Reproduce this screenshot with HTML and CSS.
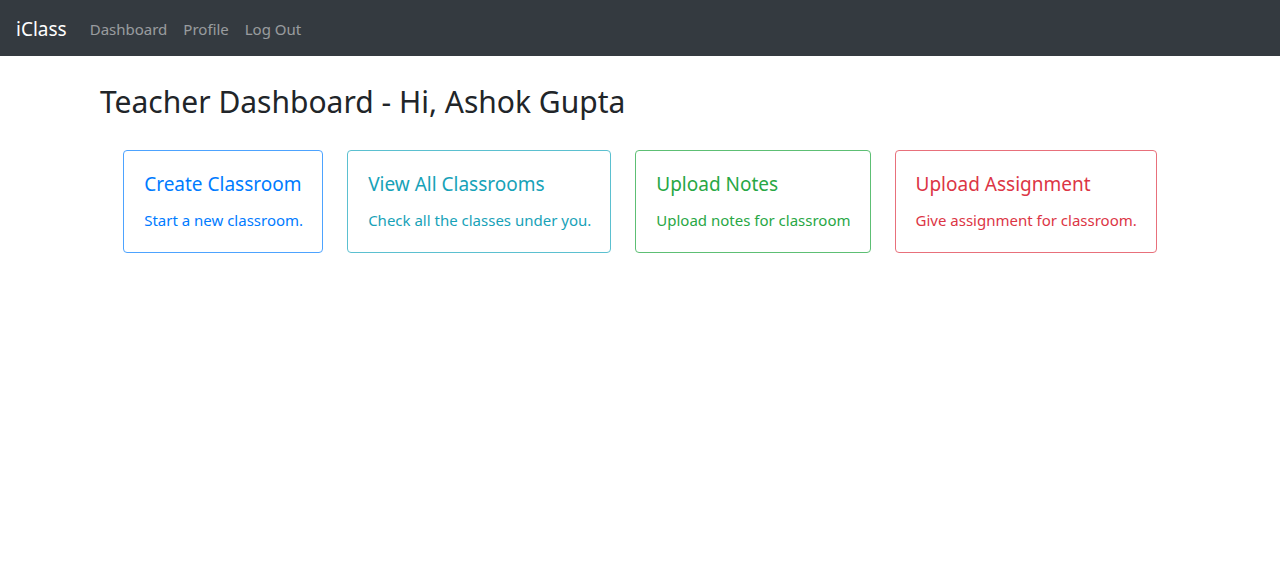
FILE: index.html
```html
<!DOCTYPE html>
<html lang="en">
<head>
<meta charset="utf-8">
<title>iClass - Teacher Dashboard</title>
<link rel="stylesheet" href="styles.css">
</head>
<body>
<nav class="navbar">
  <a class="brand" href="#">iClass</a>
  <ul class="nav">
    <li><a href="#">Dashboard</a></li>
    <li><a href="#">Profile</a></li>
    <li><a href="#">Log Out</a></li>
  </ul>
</nav>
<main class="container">
  <h2 class="title">Teacher Dashboard - Hi, Ashok Gupta</h2>
  <div class="cards">
    <a class="card card-primary" href="#">
      <h5 class="card-title">Create Classroom</h5>
      <p class="card-text">Start a new classroom.</p>
    </a>
    <a class="card card-info" href="#">
      <h5 class="card-title">View All Classrooms</h5>
      <p class="card-text">Check all the classes under you.</p>
    </a>
    <a class="card card-success" href="#">
      <h5 class="card-title">Upload Notes</h5>
      <p class="card-text">Upload notes for classroom</p>
    </a>
    <a class="card card-danger" href="#">
      <h5 class="card-title">Upload Assignment</h5>
      <p class="card-text">Give assignment for classroom.</p>
    </a>
  </div>
</main>
</body>
</html>
```
FILE: styles.css
```css
* { box-sizing: border-box; }
html, body { margin: 0; padding: 0; }
body {
  font-family: "Noto Sans", "Open Sans", sans-serif;
  font-size: 16px;
  line-height: 1.5;
  color: #212529;
  background: #fff;
}
a { text-decoration: none; }

.navbar {
  display: flex;
  align-items: center;
  height: 56px;
  padding: 2px 16px 0;
  background: #343a40;
}
.brand {
  color: #fff;
  font-size: 19px;
  margin-right: 15px;
  line-height: 30px;
}
.nav {
  display: flex;
  list-style: none;
  margin: 0;
  padding: 0;
}
.nav a {
  display: block;
  padding: 8px;
  color: rgba(255,255,255,0.5);
  font-size: 15px;
}

.container {
  max-width: 1110px;
  margin: 0 auto;
  padding: 0 15px;
}
.title {
  margin: 28px 0 30px;
  font-size: 30px;
  font-weight: 400;
  line-height: 1.2;
}
.cards {
  display: flex;
  justify-content: center;
  gap: 24px;
}
.card {
  display: block;
  padding: 21px 19px 20px 20px;
  border: 1px solid;
  border-radius: 4px;
}
.card-title {
  margin: 0 0 12px;
  font-size: 19px;
  font-weight: 400;
  line-height: 24px;
}
.card-text {
  margin: 0;
  font-size: 15px;
  line-height: 24px;
}
.card-primary { border-color: #4da3ff; color: #007bff; }
.card-info { border-color: #5bc0d0; color: #17a2b8; }
.card-success { border-color: #5dbf74; color: #28a745; }
.card-danger { border-color: #e8707b; color: #dc3545; }
```
